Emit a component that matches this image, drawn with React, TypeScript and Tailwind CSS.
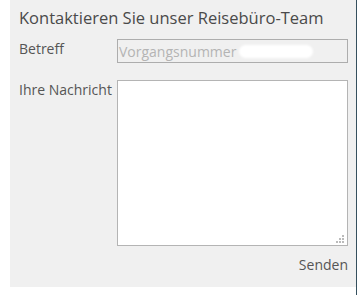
export default function App() {
  return (
    <div className="flex h-[295px] w-[361px] bg-white font-['Open_Sans',sans-serif]">
      <div className="ml-[10px] flex h-[287px] w-[346px] flex-col bg-[#f0f0f0] pl-[9px] pr-[8px] pt-[6px]">
        <h1 className="text-[16.5px] leading-[24px] text-[#4a4a4a]">
          Kontaktieren Sie unser Reisebüro-Team
        </h1>
        <div className="mt-[9px] flex items-start">
          <label className="w-[98px] text-[14px] leading-[20px] text-[#555]">Betreff</label>
          <div className="flex h-[24px] flex-1 items-center border border-[#adadad] bg-[#f0f0f0] px-[1px]">
            <span className="text-[14px] text-[#b4b4b4]">Vorgangsnummer</span>
            <span className="ml-[3px] h-[13px] w-[74px] rounded-full bg-white blur-[1px]" />
          </div>
        </div>
        <div className="mt-[17px] flex items-start">
          <label className="w-[98px] text-[14px] leading-[20px] text-[#555]">Ihre Nachricht</label>
          <div className="relative flex-1">
            <textarea className="block h-[166px] w-full resize-none border border-[#b4b4b4] bg-white outline-none" />
            <div className="absolute bottom-[3px] right-[4px] flex flex-col items-end gap-[1px]">
              <div className="flex gap-[1px]">
                <span className="h-[2px] w-[2px] bg-[#bbb]" />
              </div>
              <div className="flex gap-[1px]">
                <span className="h-[2px] w-[2px] bg-[#bbb]" />
                <span className="h-[2px] w-[2px] bg-[#bbb]" />
              </div>
              <div className="flex gap-[1px]">
                <span className="h-[2px] w-[2px] bg-[#bbb]" />
                <span className="h-[2px] w-[2px] bg-[#bbb]" />
                <span className="h-[2px] w-[2px] bg-[#bbb]" />
              </div>
            </div>
          </div>
        </div>
        <div className="mt-[9px] flex justify-end">
          <button type="button" className="text-[14px] leading-[20px] text-[#555]">
            Senden
          </button>
        </div>
      </div>
      <div className="w-[1px] bg-[#35505e]" />
    </div>
  );
}
